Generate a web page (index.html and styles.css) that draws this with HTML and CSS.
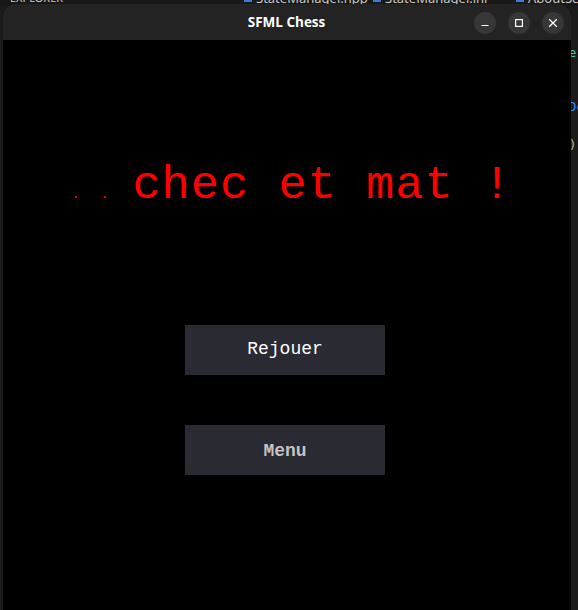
FILE: index.html
```html
<!DOCTYPE html>
<html lang="fr">
<head>
<meta charset="utf-8">
<title>SFML Chess</title>
<link rel="stylesheet" href="styles.css">
</head>
<body>
<div class="desktop">
  <div class="editor-tabs">
    <span class="tab tab-explorer">EXPLORER</span>
    <span class="tab tab-a"><i class="ficon"></i>StateManager.hpp</span>
    <span class="tab tab-b"><i class="ficon"></i>StateManager.inl</span>
    <span class="tab tab-c"><i class="ficon"></i>AboutScreen</span>
  </div>
  <div class="editor-code">
    <span class="code-line green">e</span>
    <span class="code-line blue">Dc</span>
    <span class="code-line orange">)</span>
  </div>

  <div class="window">
    <div class="titlebar">
      <div class="title">SFML Chess</div>
      <div class="controls">
        <span class="ctl">
          <svg width="10" height="10" viewBox="0 0 10 10"><path d="M1.5 7.5h7" stroke="#fff" stroke-width="1.2" fill="none"/></svg>
        </span>
        <span class="ctl">
          <svg width="10" height="10" viewBox="0 0 10 10"><rect x="1.6" y="1.6" width="6.8" height="6.8" stroke="#fff" stroke-width="1.2" fill="none"/></svg>
        </span>
        <span class="ctl">
          <svg width="10" height="10" viewBox="0 0 10 10"><path d="M1.2 1.2l7.6 7.6M8.8 1.2l-7.6 7.6" stroke="#fff" stroke-width="1.3" fill="none"/></svg>
        </span>
      </div>
    </div>
    <div class="game">
      <div class="headline"><span class="bad"><i class="dot"></i></span><span class="bad"><i class="dot"></i></span>chec et mat !</div>
      <div class="menu">
        <div class="btn">Rejouer</div>
        <div class="btn btn-hover">Menu</div>
      </div>
    </div>
  </div>
</div>
</body>
</html>
```

FILE: styles.css
```css
* { box-sizing: border-box; }
html, body { margin: 0; padding: 0; }
body {
  background: #1c1c1c;
  width: 578px;
  height: 610px;
  overflow: hidden;
}
.desktop {
  position: relative;
  width: 578px;
  height: 610px;
  background: #1b1b1b;
  font-family: "Noto Sans", "DejaVu Sans", sans-serif;
}
.editor-tabs {
  height: 6px;
  position: relative;
  overflow: hidden;
  background: #181818;
}
.tab {
  position: absolute;
  top: -9px;
  font-size: 13px;
  color: #c8c8c8;
  line-height: 14px;
  white-space: nowrap;
  display: flex;
  align-items: center;
  gap: 4px;
}
.tab-explorer { left: 10px; font-size: 11px; }
.tab-a { left: 244px; }
.tab-b { left: 373px; }
.tab-c { left: 516px; }
.ficon {
  display: inline-block;
  width: 8px;
  height: 8px;
  background: #3a7bd5;
}
.editor-code {
  position: absolute;
  left: 571px;
  top: 46px;
  width: 7px;
  overflow: hidden;
  font-family: "DejaVu Sans Mono", monospace;
  font-size: 12px;
  display: flex;
  flex-direction: column;
}
.code-line { display: block; line-height: 14px; margin-left: -2px; }
.code-line.green { color: #4ec9b0; margin-top: 0; }
.code-line.blue { color: #3794ff; margin-top: 40px; }
.code-line.orange { color: #d7ba7d; margin-top: 24px; }

.window {
  position: absolute;
  left: 3px;
  top: 4px;
  width: 568px;
  height: 606px;
  border-radius: 12px 12px 0 0;
  overflow: hidden;
  background: #000;
  display: flex;
  flex-direction: column;
}
.titlebar {
  height: 36px;
  flex: none;
  background: #232323;
  position: relative;
  display: flex;
  align-items: center;
  justify-content: flex-end;
  padding-right: 7px;
}
.title {
  position: absolute;
  left: 0;
  right: 0;
  top: 0;
  height: 36px;
  line-height: 36px;
  text-align: center;
  color: #ffffff;
  font-family: "Open Sans", "Noto Sans", sans-serif;
  font-weight: 700;
  font-size: 13.5px;
  padding-right: 1px;
}
.controls {
  display: flex;
  gap: 12px;
  position: relative;
  margin-top: 1px;
}
.ctl {
  width: 22px;
  height: 22px;
  border-radius: 50%;
  background: #373737;
  display: flex;
  align-items: center;
  justify-content: center;
}
.ctl svg { display: block; }

.game {
  flex: 1;
  background: #000;
  display: flex;
  flex-direction: column;
}
.headline {
  margin-top: 122px;
  padding-left: 71px;
  font-family: "Liberation Mono", "DejaVu Sans Mono", monospace;
  font-size: 47px;
  letter-spacing: 1px;
  line-height: 48px;
  color: #ff0000;
  white-space: pre;
}
.bad {
  display: inline-block;
  width: 29.2px;
  height: 2px;
  position: relative;
}
.dot {
  display: block;
  width: 2px;
  height: 2px;
  margin-left: 1px;
  background: #e00000;
}
.menu {
  margin-top: 115px;
  display: flex;
  flex-direction: column;
  align-items: center;
  gap: 50px;
  padding-right: 4px;
}
.btn {
  width: 200px;
  height: 50px;
  background: #2a2a32;
  color: #ffffff;
  font-family: "Liberation Mono", "DejaVu Sans Mono", monospace;
  font-size: 18px;
  line-height: 48px;
  text-align: center;
}
.btn-hover {
  color: #c4c4c4;
  font-weight: 700;
  line-height: 52px;
}
```
